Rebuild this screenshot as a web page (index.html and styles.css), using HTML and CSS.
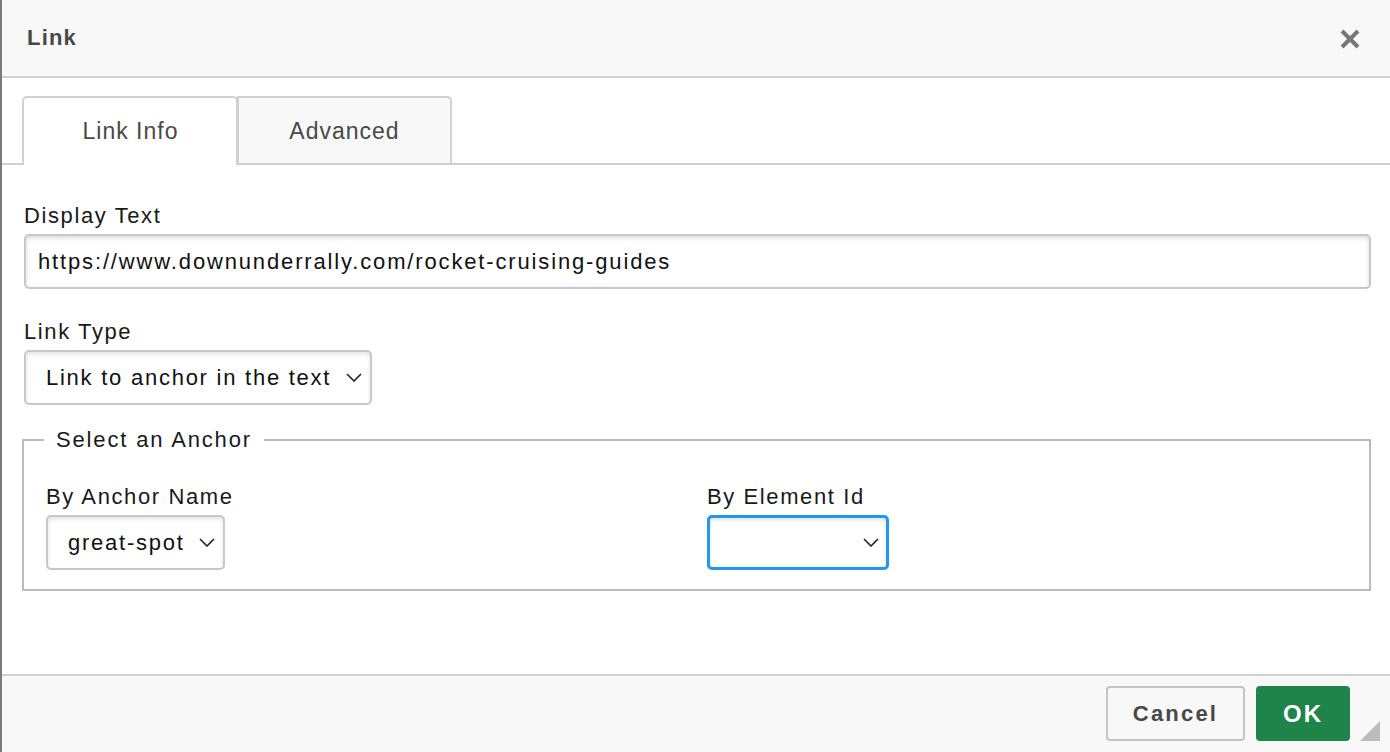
FILE: index.html
```html
<!DOCTYPE html>
<html>
<head>
<meta charset="utf-8">
<link rel="stylesheet" href="styles.css">
</head>
<body>
<div class="edge"></div>
<div class="dialog">
  <div class="header">
    <div class="title">Link</div>
    <svg class="close" width="20" height="20" viewBox="0 0 20 20"><path d="M2 2 L18 18 M18 2 L2 18" stroke="#777" stroke-width="4" stroke-linecap="butt"/></svg>
  </div>
  <div class="body">
    <div class="tabs">
      <div class="tab active">Link Info</div>
      <div class="tab">Advanced</div>
    </div>
    <div class="content">
      <label class="lbl">Display Text</label>
      <div class="input">https://www.downunderrally.com/rocket-cruising-guides</div>
      <label class="lbl lbl-gap">Link Type</label>
      <div class="select sel-type"><span>Link to anchor in the text</span><svg class="chev" width="16" height="9" viewBox="0 0 16 9"><path d="M1 1 L8 8 L15 1" fill="none" stroke="#222" stroke-width="1.6"/></svg></div>
      <fieldset class="anchor">
        <legend>Select an Anchor</legend>
        <div class="cols">
          <div class="col">
            <label class="lbl">By Anchor Name</label>
            <div class="select sel-name"><span>great-spot</span><svg class="chev" width="16" height="9" viewBox="0 0 16 9"><path d="M1 1 L8 8 L15 1" fill="none" stroke="#222" stroke-width="1.6"/></svg></div>
          </div>
          <div class="col">
            <label class="lbl">By Element Id</label>
            <div class="select sel-id focus"><span></span><svg class="chev" width="16" height="9" viewBox="0 0 16 9"><path d="M1 1 L8 8 L15 1" fill="none" stroke="#222" stroke-width="1.6"/></svg></div>
          </div>
        </div>
      </fieldset>
    </div>
  </div>
  <div class="footer">
    <div class="btn cancel">Cancel</div>
    <div class="btn ok">OK</div>
    <div class="resize"></div>
  </div>
</div>
</body>
</html>
```
FILE: styles.css
```css
html, body {
  margin: 0;
  padding: 0;
  height: 100%;
}
body {
  display: flex;
  background: #fff;
  font-family: "Liberation Sans", Arial, sans-serif;
  overflow: hidden;
}
.edge {
  width: 2px;
  background: #7a7a7a;
  flex: none;
}
.dialog {
  flex: 1;
  display: flex;
  flex-direction: column;
  height: 752px;
}
.header {
  height: 76px;
  background: #f8f8f8;
  border-bottom: 2px solid #d1d1d1;
  display: flex;
  align-items: center;
  justify-content: space-between;
  padding: 0 30px 0 25px;
  flex: none;
}
.title {
  font-size: 22px;
  font-weight: bold;
  color: #484848;
  letter-spacing: 1.2px;
}
.close {
  margin-top: 2px;
}
.body {
  flex: 1;
  padding-top: 18px;
}
.tabs {
  display: flex;
  padding-left: 20px;
  border-bottom: 2px solid #d1d1d1;
  height: 67px;
}
.tab {
  width: 211px;
  height: 67px;
  box-sizing: border-box;
  border: 2px solid #d1d1d1;
  border-bottom: none;
  border-radius: 5px 5px 0 0;
  background: #f8f8f8;
  color: #484848;
  font-size: 23px;
  letter-spacing: 1px;
  display: flex;
  align-items: center;
  justify-content: center;
}
.tab.active {
  width: 216px;
  height: 69px;
  background: #fff;
  position: relative;
  z-index: 1;
  padding-left: 1px;
}
.tab + .tab {
  margin-left: -1px;
  width: 215px;
  border-radius: 0 5px 0 0;
  padding-top: 1px;
}
.content {
  padding: 38px 19px 0 22px;
}
.lbl {
  display: block;
  font-size: 22px;
  line-height: 26px;
  color: #1a1a1a;
  margin-bottom: 5px;
  letter-spacing: 1.6px;
}
.lbl-gap {
  margin-top: 30px;
}
.input {
  height: 55px;
  box-sizing: border-box;
  border: 2px solid #c8c8c8;
  border-radius: 5px;
  box-shadow: inset 0 2px 4px rgba(0,0,0,0.15);
  font-size: 22px;
  letter-spacing: 1.85px;
  color: #111;
  display: flex;
  align-items: center;
  padding-left: 12px;
}
.select {
  display: inline-flex;
  align-items: center;
  height: 55px;
  box-sizing: border-box;
  border: 2px solid #c8c8c8;
  border-radius: 5px;
  box-shadow: inset 0 2px 4px rgba(0,0,0,0.12);
  font-size: 22px;
  letter-spacing: 1.75px;
  color: #111;
  padding: 0 8px 0 20px;
  background: #fff;
}
.select span {
  flex: 1;
}
.chev {
  margin-left: 10px;
}
.sel-type {
  width: 348px;
}
.sel-name {
  width: 179px;
}
.sel-id {
  width: 182px;
}
.select.focus {
  border: 3px solid #2196f3;
  box-shadow: inset 0 2px 4px rgba(0,0,0,0.12);
  padding-right: 7px;
}
.anchor {
  margin: 22px 0 0 -2px;
  border: 2px solid #bbb;
  padding: 31px 22px 19px 22px;
  min-width: 0;
}
.anchor legend {
  font-size: 22px;
  letter-spacing: 1.85px;
  color: #1a1a1a;
  padding: 0 12px;
  margin-left: -2px;
  line-height: 26px;
}
.cols {
  display: grid;
  grid-template-columns: 661px 1fr;
}
.footer {
  flex: none;
  background: #f8f8f8;
  border-top: 2px solid #d1d1d1;
  display: flex;
  align-items: flex-start;
  padding: 10px 0 0 1104px;
  box-sizing: border-box;
  height: 78px;
  position: relative;
}
.btn {
  height: 55px;
  box-sizing: border-box;
  border-radius: 4px;
  display: flex;
  align-items: center;
  justify-content: center;
  font-size: 22px;
  font-weight: bold;
}
.cancel {
  width: 139px;
  border: 2px solid #c4c4c4;
  background: #f8f8f8;
  color: #484848;
  letter-spacing: 2.2px;
}
.ok {
  width: 94px;
  margin-left: 11px;
  background: #1e8449;
  color: #fff;
  font-size: 24px;
  letter-spacing: 2px;
}
.resize {
  position: absolute;
  right: 10px;
  bottom: 11px;
  width: 0;
  height: 0;
  border-left: 20px solid transparent;
  border-bottom: 20px solid #bcbcbc;
}
```
